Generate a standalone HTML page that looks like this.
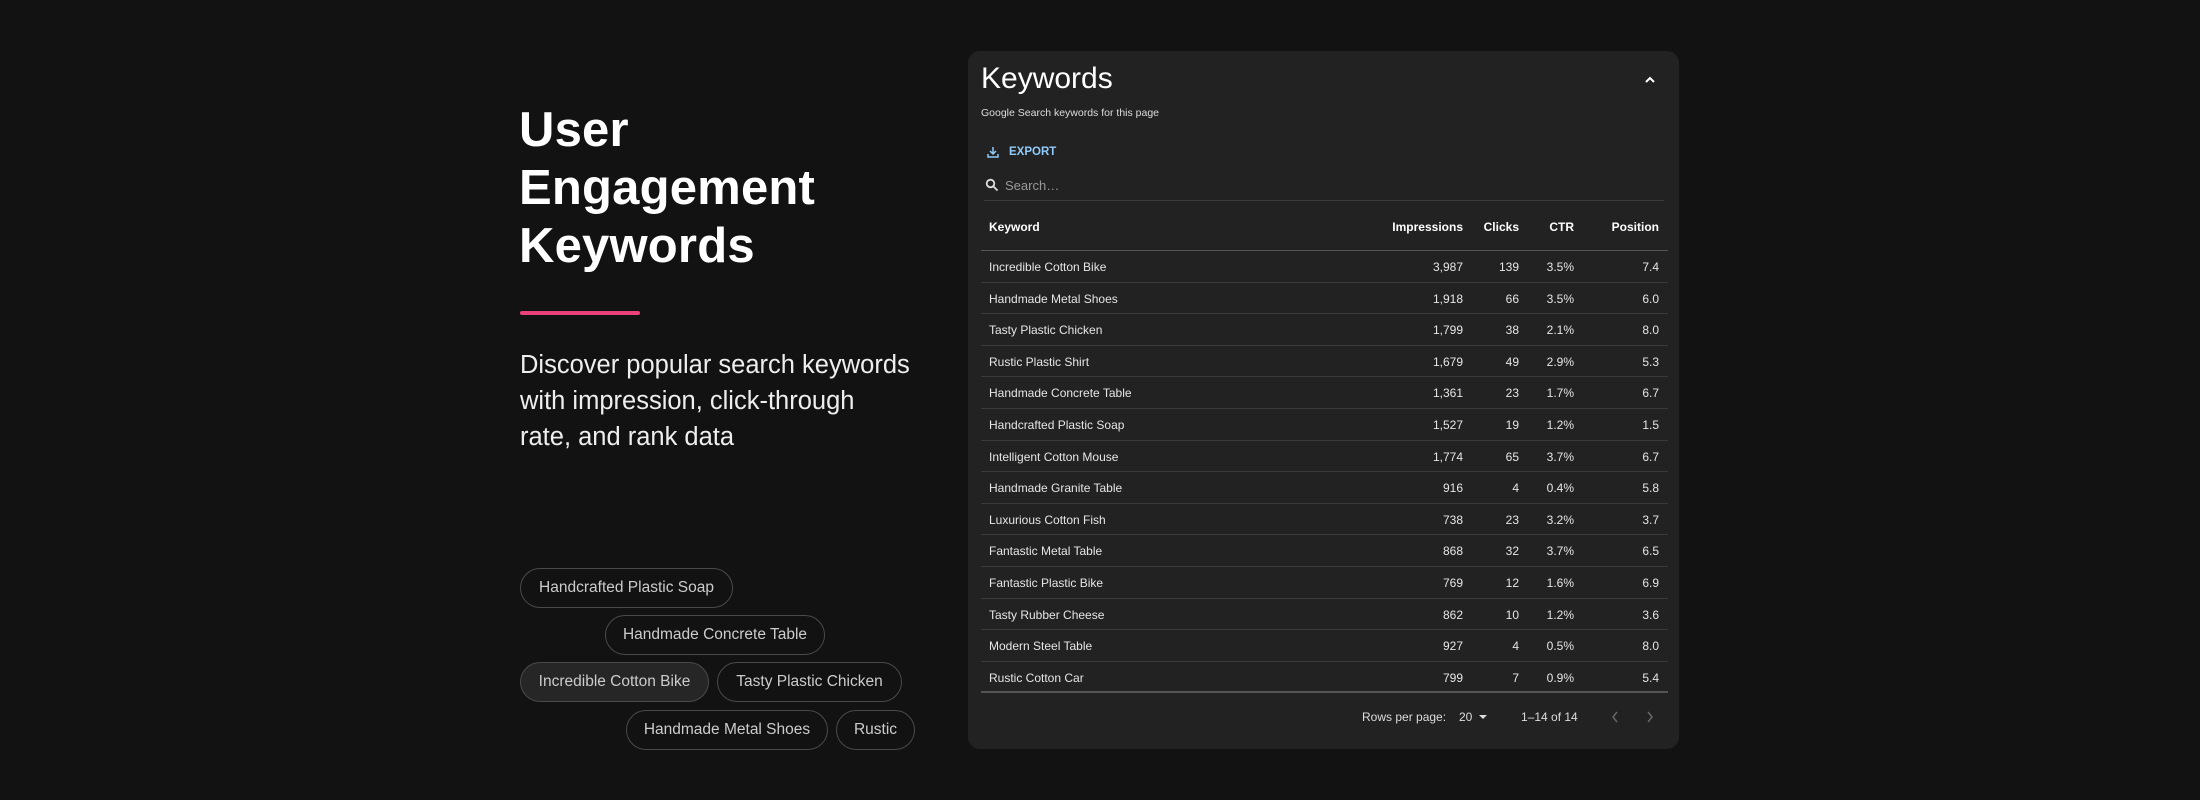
<!DOCTYPE html>
<html><head><meta charset="utf-8"><style>
*{margin:0;padding:0;box-sizing:border-box}
body{width:2200px;height:800px;background:#121212;font-family:"Liberation Sans",sans-serif;position:relative;overflow:hidden;color:#fff}
.abs{position:absolute}
h1{position:absolute;left:519px;top:101px;font-size:49px;line-height:58px;font-weight:700;color:#fff;letter-spacing:0.2px}
.bar{left:520px;top:311px;width:120px;height:4px;background:#ec407a;border-radius:2px}
.desc{left:520px;top:347px;font-size:25.5px;line-height:36px;color:#eee;white-space:nowrap}
.chip{position:absolute;height:40px;border:1px solid #4a4a4a;border-radius:20px;font-size:15.5px;color:#ccc;line-height:38px;text-align:center}
.card{left:968px;top:51px;width:711px;height:698px;background:#222;border-radius:12px}
.row{position:absolute;left:981px;width:687px;height:31.6px;border-bottom:1px solid #3a3a3a;font-size:12px;color:#e6e6e6}
.row span{position:absolute;top:9px}
.c1{left:8px}.c2{right:205px}.c3{right:149px}.c4{right:94px}.c5{right:9px}
.hdr{font-weight:700;color:#fff;border-bottom:1px solid #555}
.hdr span{top:1px}
</style></head><body>
<h1>User<br>Engagement<br>Keywords</h1>
<div class="abs bar"></div>
<div class="abs desc">Discover popular search keywords<br>with impression, click-through<br>rate, and rank data</div>
<div class="chip" style="left:520px;top:568px;width:213px">Handcrafted Plastic Soap</div>
<div class="chip" style="left:605px;top:615px;width:220px">Handmade Concrete Table</div>
<div class="chip" style="left:520px;top:662px;width:189px;background:#262626">Incredible Cotton Bike</div>
<div class="chip" style="left:717px;top:662px;width:185px">Tasty Plastic Chicken</div>
<div class="chip" style="left:626px;top:710px;width:202px">Handmade Metal Shoes</div>
<div class="chip" style="left:836px;top:710px;width:79px">Rustic</div>

<div class="abs card"></div>
<div class="abs" style="left:981px;top:62px;font-size:30px;color:#fff">Keywords</div>
<svg class="abs" style="left:1643px;top:73px" width="14" height="14" viewBox="0 0 14 14"><path d="M3 9 L7 5 L11 9" stroke="#fff" stroke-width="2" fill="none"/></svg>
<div class="abs" style="left:981px;top:107px;font-size:10.5px;color:#ddd">Google Search keywords for this page</div>
<svg class="abs" style="left:986px;top:145px" width="14" height="14" viewBox="0 0 14 14" fill="none" stroke="#90caf9" stroke-width="1.5"><path d="M7 2v7M4 6l3 3 3-3M2 9v3h10V9"/></svg>
<div class="abs" style="left:1009px;top:146px;font-size:11.5px;font-weight:700;color:#90caf9">EXPORT</div>
<svg class="abs" style="left:985px;top:178px" width="14" height="14" viewBox="0 0 14 14" fill="none" stroke="#ddd" stroke-width="1.8"><circle cx="5.5" cy="5.5" r="3.8"/><path d="M8.5 8.5L12.5 12.5"/></svg>
<div class="abs" style="left:1005px;top:178px;font-size:13px;color:#999">Search…</div>
<div class="abs" style="left:984px;top:200px;width:680px;height:1px;background:#3c3c3c"></div>

<div class="row hdr" style="top:219.4px"><span class="c1">Keyword</span><span class="c2">Impressions</span><span class="c3">Clicks</span><span class="c4">CTR</span><span class="c5">Position</span></div>
<div class="row" style="top:251px"><span class="c1">Incredible Cotton Bike</span><span class="c2">3,987</span><span class="c3">139</span><span class="c4">3.5%</span><span class="c5">7.4</span></div>
<div class="row" style="top:282.6px"><span class="c1">Handmade Metal Shoes</span><span class="c2">1,918</span><span class="c3">66</span><span class="c4">3.5%</span><span class="c5">6.0</span></div>
<div class="row" style="top:314.2px"><span class="c1">Tasty Plastic Chicken</span><span class="c2">1,799</span><span class="c3">38</span><span class="c4">2.1%</span><span class="c5">8.0</span></div>
<div class="row" style="top:345.8px"><span class="c1">Rustic Plastic Shirt</span><span class="c2">1,679</span><span class="c3">49</span><span class="c4">2.9%</span><span class="c5">5.3</span></div>
<div class="row" style="top:377.4px"><span class="c1">Handmade Concrete Table</span><span class="c2">1,361</span><span class="c3">23</span><span class="c4">1.7%</span><span class="c5">6.7</span></div>
<div class="row" style="top:409px"><span class="c1">Handcrafted Plastic Soap</span><span class="c2">1,527</span><span class="c3">19</span><span class="c4">1.2%</span><span class="c5">1.5</span></div>
<div class="row" style="top:440.6px"><span class="c1">Intelligent Cotton Mouse</span><span class="c2">1,774</span><span class="c3">65</span><span class="c4">3.7%</span><span class="c5">6.7</span></div>
<div class="row" style="top:472.2px"><span class="c1">Handmade Granite Table</span><span class="c2">916</span><span class="c3">4</span><span class="c4">0.4%</span><span class="c5">5.8</span></div>
<div class="row" style="top:503.8px"><span class="c1">Luxurious Cotton Fish</span><span class="c2">738</span><span class="c3">23</span><span class="c4">3.2%</span><span class="c5">3.7</span></div>
<div class="row" style="top:535.4px"><span class="c1">Fantastic Metal Table</span><span class="c2">868</span><span class="c3">32</span><span class="c4">3.7%</span><span class="c5">6.5</span></div>
<div class="row" style="top:567px"><span class="c1">Fantastic Plastic Bike</span><span class="c2">769</span><span class="c3">12</span><span class="c4">1.6%</span><span class="c5">6.9</span></div>
<div class="row" style="top:598.6px"><span class="c1">Tasty Rubber Cheese</span><span class="c2">862</span><span class="c3">10</span><span class="c4">1.2%</span><span class="c5">3.6</span></div>
<div class="row" style="top:630.2px"><span class="c1">Modern Steel Table</span><span class="c2">927</span><span class="c3">4</span><span class="c4">0.5%</span><span class="c5">8.0</span></div>
<div class="row" style="top:661.8px;border-bottom:2px solid #555"><span class="c1">Rustic Cotton Car</span><span class="c2">799</span><span class="c3">7</span><span class="c4">0.9%</span><span class="c5">5.4</span></div>

<div class="abs" style="left:1362px;top:710px;font-size:12px;color:#ddd">Rows per page:</div>
<div class="abs" style="left:1459px;top:710px;font-size:12px;color:#ddd">20</div>
<svg class="abs" style="left:1478px;top:714px" width="10" height="6"><path d="M1 1h8L5 5z" fill="#ddd"/></svg>
<div class="abs" style="left:1521px;top:710px;font-size:12px;color:#ddd">1–14 of 14</div>
<svg class="abs" style="left:1610px;top:710px" width="10" height="14"><path d="M7 2L3 7l4 5" stroke="#666" stroke-width="1.5" fill="none"/></svg>
<svg class="abs" style="left:1645px;top:710px" width="10" height="14"><path d="M3 2l4 5-4 5" stroke="#666" stroke-width="1.5" fill="none"/></svg>
</body></html>
